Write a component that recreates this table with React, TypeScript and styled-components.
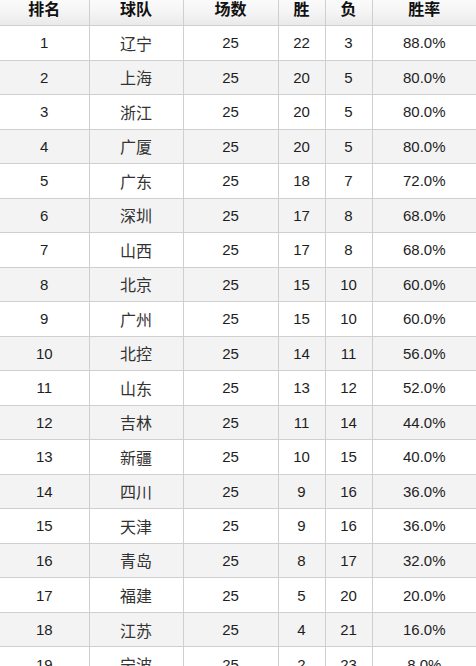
import React from "react";
import styled, { createGlobalStyle } from "styled-components";

const GlobalStyle = createGlobalStyle`
  html, body {
    margin: 0;
    padding: 0;
    background: #ffffff;
    overflow: hidden;
  }
`;

const Page = styled.div`
  width: 476px;
  height: 666px;
  overflow: hidden;
`;

const Table = styled.table`
  width: 476px;
  margin-top: -9px;
  border-collapse: collapse;
  table-layout: fixed;
  font-family: "Liberation Sans", "Noto Sans CJK SC", sans-serif;
  color: #222;
`;

const HeadRow = styled.tr`
  height: 34.5px;
  background: linear-gradient(to bottom, #ffffff 0%, #f6f6f6 55%, #e9e9e9 100%);
`;

const HeadCell = styled.th`
  padding: 0;
  font-family: "Noto Sans CJK SC", sans-serif;
  font-size: 16px;
  font-weight: 700;
  color: #111;
  text-align: center;
  border: 1px solid #cfcfcf;
  border-top: none;

  &:first-child {
    border-left: none;
  }
  &:last-child {
    border-right: none;
  }
`;

const Row = styled.tr<{ $shade: boolean }>`
  height: 34.53px;
  background: ${(p) => (p.$shade ? "#f3f3f3" : "#ffffff")};
`;

const Cell = styled.td<{ $cjk?: boolean }>`
  padding: 0;
  text-align: center;
  font-family: ${(p) =>
    p.$cjk ? `"Noto Sans CJK SC", sans-serif` : `"Liberation Sans", sans-serif`};
  font-size: ${(p) => (p.$cjk ? "16px" : "15px")};
  color: ${(p) => (p.$cjk ? "#333" : "#1e1e1e")};
  border: 1px solid #cfcfcf;

  &:first-child {
    border-left: none;
  }
  &:last-child {
    border-right: none;
  }
`;

type Team = [number, string, number, number, number, string];

const teams: Team[] = [
  [1, "辽宁", 25, 22, 3, "88.0%"],
  [2, "上海", 25, 20, 5, "80.0%"],
  [3, "浙江", 25, 20, 5, "80.0%"],
  [4, "广厦", 25, 20, 5, "80.0%"],
  [5, "广东", 25, 18, 7, "72.0%"],
  [6, "深圳", 25, 17, 8, "68.0%"],
  [7, "山西", 25, 17, 8, "68.0%"],
  [8, "北京", 25, 15, 10, "60.0%"],
  [9, "广州", 25, 15, 10, "60.0%"],
  [10, "北控", 25, 14, 11, "56.0%"],
  [11, "山东", 25, 13, 12, "52.0%"],
  [12, "吉林", 25, 11, 14, "44.0%"],
  [13, "新疆", 25, 10, 15, "40.0%"],
  [14, "四川", 25, 9, 16, "36.0%"],
  [15, "天津", 25, 9, 16, "36.0%"],
  [16, "青岛", 25, 8, 17, "32.0%"],
  [17, "福建", 25, 5, 20, "20.0%"],
  [18, "江苏", 25, 4, 21, "16.0%"],
  [19, "宁波", 25, 2, 23, "8.0%"],
];

const columns = [
  { title: "排名", width: 89 },
  { title: "球队", width: 94 },
  { title: "场数", width: 95 },
  { title: "胜", width: 47 },
  { title: "负", width: 47 },
  { title: "胜率", width: 104 },
];

const App: React.FC = () => {
  return (
    <>
      <GlobalStyle />
      <Page>
        <Table>
          <colgroup>
            {columns.map((c) => (
              <col key={c.title} style={{ width: c.width }} />
            ))}
          </colgroup>
          <thead>
            <HeadRow>
              {columns.map((c) => (
                <HeadCell key={c.title}>{c.title}</HeadCell>
              ))}
            </HeadRow>
          </thead>
          <tbody>
            {teams.map(([rank, name, played, won, lost, rate]) => (
              <Row key={rank} $shade={rank % 2 === 0}>
                <Cell>{rank}</Cell>
                <Cell $cjk>{name}</Cell>
                <Cell>{played}</Cell>
                <Cell>{won}</Cell>
                <Cell>{lost}</Cell>
                <Cell>{rate}</Cell>
              </Row>
            ))}
          </tbody>
        </Table>
      </Page>
    </>
  );
};

export default App;
